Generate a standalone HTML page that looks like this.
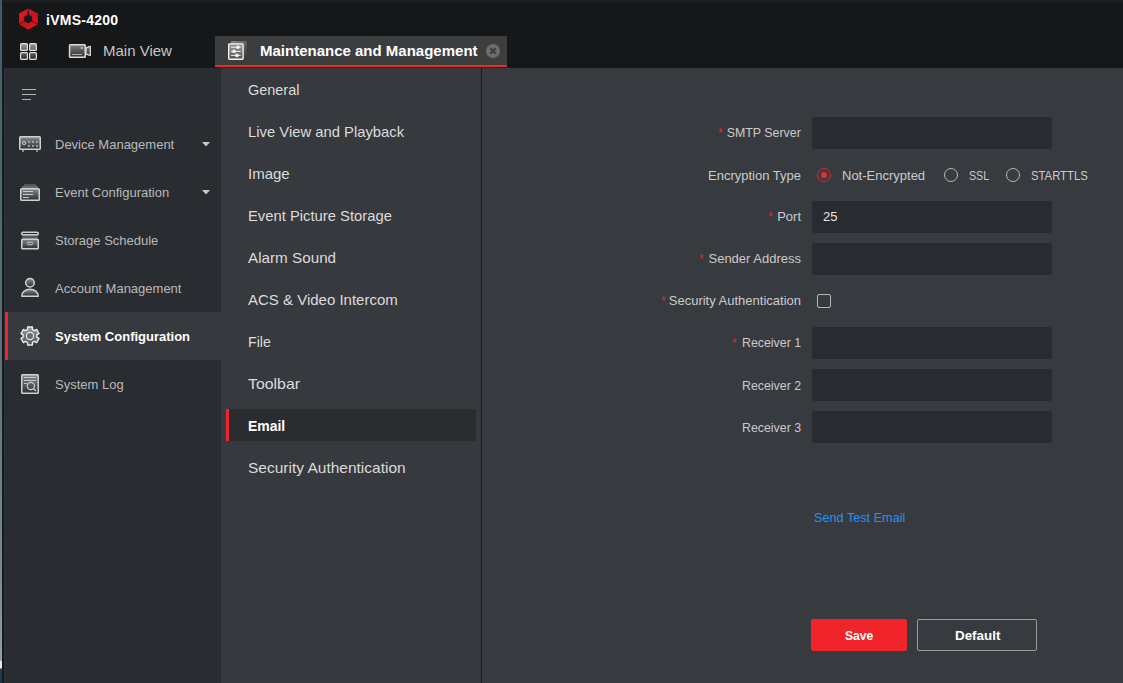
<!DOCTYPE html>
<html><head><meta charset="utf-8">
<style>
*{margin:0;padding:0;box-sizing:border-box;}
html,body{width:1123px;height:683px;overflow:hidden;background:#161719;font-family:"Liberation Sans",sans-serif;}
.a{position:absolute;}
.m{position:absolute;white-space:nowrap;line-height:1;}
#desk{left:0;top:0;width:2px;height:683px;background:linear-gradient(to bottom,#43586a 0px,#4f6570 150px,#5a6f7a 330px,#6a7f88 480px,#7d9099 600px,#8fa0a8 660px,#e6ecee 662px,#e6ecee 668px,#1d3f5c 669px,#163550 683px);}
#wline{left:2px;top:0;width:2px;height:683px;background:#17191b;}
#topl{left:3px;top:0;width:1120px;height:2px;background:#1c1f22;}
#side{left:4px;top:68px;width:217px;height:615px;background:#292c30;border-left:1px solid #2f3236;}
#menu{left:221px;top:68px;width:260px;height:615px;background:#36393e;}
#div{left:481px;top:68px;width:1px;height:615px;background:#1a1c1f;}
#cont{left:482px;top:68px;width:641px;height:615px;background:#373a3f;}
.tab{left:215px;top:36px;width:292px;height:31px;background:#3c3d3f;}
.tabred{left:215px;top:65px;width:292px;height:2px;background:#f0252b;}
.si{color:#bababa;font-size:13px;}
.mi{color:#dcdcdc;font-size:15px;}
.lbl{color:#cbcbcb;font-size:13px;}
.inp{position:absolute;left:812px;width:240px;height:32px;background:#282b2f;border-radius:3px;}
.req{color:#e8262d;font-size:12px;}
</style></head><body>
<div class="a" id="desk"></div>
<div class="a" id="wline"></div>
<div class="a" id="topl"></div>

<!-- header -->
<svg class="a" style="left:16px;top:6px" width="26" height="26" viewBox="0 0 26 26">
  <defs><linearGradient id="lg" x1="0" y1="0" x2="1" y2="1"><stop offset="0" stop-color="#f01c22"/><stop offset="0.5" stop-color="#c8121a"/><stop offset="1" stop-color="#e8161d"/></linearGradient></defs>
  <path d="M12.4 2.4 L21.8 7.6 L21.8 18.3 L12.4 23.8 L3.1 18.3 L3.1 7.6 Z" fill="url(#lg)"/>
  <path d="M12.1 2.4 L12.5 2.4 L13.3 10 L11.3 10 Z" fill="#161719"/><path d="M12.2 13 L3.1 18.3 M12.2 13 L21.8 18.3" stroke="#161719" stroke-width="0.7"/>
  <path d="M12.2 8.6 L16.1 10.8 L16.1 15.1 L12.2 17.2 L8.3 15.1 L8.3 10.8 Z" fill="#161719"/>
</svg>
<div class="m" style="left:46px;top:13px;color:#fff;font-size:14px;font-weight:bold;letter-spacing:0.25px;">iVMS-4200</div>

<svg class="a" style="left:19px;top:42px" width="20" height="20" viewBox="0 0 20 20">
 <defs><linearGradient id="g1" x1="0" y1="0" x2="0" y2="1"><stop offset="0" stop-color="#a0a0a0"/><stop offset="1" stop-color="#606060"/></linearGradient>
 <linearGradient id="g2" x1="0" y1="0" x2="0" y2="1"><stop offset="0" stop-color="#5e5e5e"/><stop offset="1" stop-color="#2a2a2a"/></linearGradient></defs>
 <rect x="1.6" y="1.6" width="6.8" height="6.8" rx="0.9" fill="url(#g1)" stroke="#dedede" stroke-width="1.2"/>
 <rect x="10.6" y="1.6" width="6.8" height="6.8" rx="0.9" fill="url(#g1)" stroke="#dedede" stroke-width="1.2"/>
 <rect x="1.6" y="10.6" width="6.8" height="6.8" rx="0.9" fill="url(#g2)" stroke="#dedede" stroke-width="1.2"/>
 <rect x="10.6" y="10.6" width="6.8" height="6.8" rx="0.9" fill="url(#g2)" stroke="#dedede" stroke-width="1.2"/>
</svg>

<svg class="a" style="left:66px;top:42px" width="28" height="18" viewBox="0 0 28 18">
 <defs><linearGradient id="g3" x1="0" y1="0" x2="0" y2="1"><stop offset="0" stop-color="#7e7e7e"/><stop offset="1" stop-color="#303030"/></linearGradient></defs>
 <rect x="3.55" y="2.65" width="15.7" height="12.6" rx="0.8" fill="url(#g3)" stroke="#dadada" stroke-width="1.5"/>
 <path d="M20 6 Q22.5 4.8 24.3 4.4 L24.3 13.4 Q22.5 13 20 11.8 Z" fill="url(#g3)" stroke="#dadada" stroke-width="1.3" stroke-linejoin="round"/>
 <rect x="14.8" y="4.9" width="2.1" height="2.1" fill="#b5b5b5"/>
 <rect x="6" y="12" width="10" height="0.9" fill="#bdbdbd"/>
</svg>
<div class="m" style="left:103px;top:43px;color:#c6c6c6;font-size:15px;">Main View</div>

<div class="a tab"></div>
<div class="a tabred"></div>
<svg class="a" style="left:226px;top:39px" width="22" height="24" viewBox="0 0 22 24">
 <defs><linearGradient id="g4" x1="0" y1="0" x2="0" y2="1"><stop offset="0" stop-color="#a0a0a0"/><stop offset="1" stop-color="#505050"/></linearGradient>
 <linearGradient id="g5" x1="0" y1="0" x2="1" y2="1"><stop offset="0" stop-color="#8a8a8a"/><stop offset="1" stop-color="#3b3c3f"/></linearGradient></defs>
 <rect x="5" y="2" width="15.8" height="16" rx="1" fill="url(#g5)"/>
 <rect x="2.7" y="4.8" width="14.4" height="15.4" rx="0.8" fill="url(#g4)" stroke="#f2f2f2" stroke-width="1.35"/>
 <path d="M5 8.3 H14.7 M5 12.4 H14.7 M5 16.4 H14.7" stroke="#ececec" stroke-width="1"/>
 <circle cx="11.9" cy="8.3" r="1.8" fill="#f2f2f2"/>
 <circle cx="8" cy="12.4" r="1.8" fill="#f2f2f2"/>
 <circle cx="10.9" cy="16.4" r="1.8" fill="#f2f2f2"/>
</svg>
<div class="m" style="left:260px;top:43px;color:#fff;font-size:15px;font-weight:bold;">Maintenance and Management</div>
<svg class="a" style="left:485px;top:43px" width="16" height="16" viewBox="0 0 16 16">
 <circle cx="8" cy="8" r="7" fill="#6c6c6c"/>
 <path d="M5.3 5.3 L10.7 10.7 M10.7 5.3 L5.3 10.7" stroke="#3b3c3f" stroke-width="2"/>
</svg>

<!-- panels -->
<div class="a" id="side"></div>
<div class="a" id="menu"></div>
<div class="a" id="div"></div>
<div class="a" id="cont"></div>

<!-- sidebar -->
<div class="a" style="left:5px;top:312px;width:216px;height:48px;background:#36393e;"></div>
<div class="a" style="left:5px;top:312px;width:3px;height:48px;background:#f0252b;"></div>
<svg class="a" style="left:22px;top:89px" width="14" height="11" viewBox="0 0 14 11">
 <path d="M0 0.5 H14 M0 5.5 H14 M0 10.5 H9" stroke="#b4b4b4" stroke-width="1"/>
</svg>


<svg class="a" style="left:16px;top:132px" width="28" height="24" viewBox="0 0 28 24">
 <defs><linearGradient id="gi" x1="0" y1="0" x2="0" y2="1"><stop offset="0" stop-color="#8a8a8a"/><stop offset="1" stop-color="#2e2e2e"/></linearGradient></defs>
 <rect x="3.75" y="4.75" width="20.5" height="12.5" rx="0.8" fill="url(#gi)" stroke="#d0d0d0" stroke-width="1.5"/>
 <rect x="6" y="18" width="2" height="2" fill="#8a8a8a"/><rect x="20" y="18" width="2" height="2" fill="#8a8a8a"/>
 <circle cx="8" cy="11" r="1.6" fill="none" stroke="#d0d0d0" stroke-width="1"/>
 <g fill="#9c9c9c"><rect x="12" y="9" width="2" height="2"/><rect x="16" y="9" width="2" height="2"/><rect x="20" y="9" width="2" height="2"/><rect x="12" y="13" width="2" height="2"/><rect x="16" y="13" width="2" height="2"/><rect x="20" y="13" width="2" height="2"/></g>
</svg>
<svg class="a" style="left:16px;top:180px" width="28" height="24" viewBox="0 0 28 24">
 <rect x="8" y="4" width="12" height="2" fill="#555"/>
 <rect x="6" y="6" width="16" height="2" fill="#6a6a6a"/>
 <rect x="4.75" y="8.75" width="18.5" height="11.5" rx="0.8" fill="url(#gi)" stroke="#d0d0d0" stroke-width="1.5"/>
 <path d="M7 11.5 H17 M7 14.5 H17 M7 17.5 H13" stroke="#c8c8c8" stroke-width="1"/>
</svg>
<svg class="a" style="left:16px;top:228px" width="28" height="24" viewBox="0 0 28 24">
 <path d="M6.5 7 H21.5 L22 11 H6 Z" fill="#5a5a5a"/>
 <rect x="5.75" y="4.25" width="16.5" height="2.6" rx="1.2" fill="#222" stroke="#d0d0d0" stroke-width="1.5"/>
 <rect x="5.75" y="11.25" width="16.5" height="9.5" rx="0.8" fill="url(#gi)" stroke="#d0d0d0" stroke-width="1.5"/>
 <rect x="11.3" y="14.3" width="5.4" height="2.4" rx="1.1" fill="none" stroke="#c8c8c8" stroke-width="1"/>
</svg>
<svg class="a" style="left:16px;top:274px" width="28" height="24" viewBox="0 0 28 24">
 <circle cx="14" cy="8.8" r="4.3" fill="url(#gi)" stroke="#d0d0d0" stroke-width="1.5"/>
 <path d="M5.75 22.25 C5.75 17.8 9.5 15.25 14 15.25 C18.5 15.25 22.25 17.8 22.25 22.25 Z" fill="url(#gi)" stroke="#d0d0d0" stroke-width="1.5" stroke-linejoin="round"/>
</svg>
<svg class="a" style="left:18px;top:324px" width="24" height="24" viewBox="0 0 24 24">
 <defs><linearGradient id="gg" x1="0" y1="0" x2="0" y2="1"><stop offset="0" stop-color="#9a9a9a"/><stop offset="1" stop-color="#555"/></linearGradient></defs>
 <path d="M9.53 5.56 L9.59 3.02 L14.41 3.02 L14.47 5.56 L16.34 6.64 L18.58 5.42 L20.98 9.59 L18.82 10.92 L18.82 13.08 L20.98 14.41 L18.58 18.58 L16.34 17.36 L14.47 18.44 L14.41 20.98 L9.59 20.98 L9.53 18.44 L7.66 17.36 L5.42 18.58 L3.02 14.41 L5.18 13.08 L5.18 10.92 L3.02 9.59 L5.42 5.42 L7.66 6.64 Z" fill="url(#gg)" stroke="#ececec" stroke-width="1.4" stroke-linejoin="round"/>
 <circle cx="12" cy="12" r="3.6" fill="#6a6a6a" stroke="#ececec" stroke-width="1.1"/>
</svg>
<svg class="a" style="left:16px;top:370px" width="28" height="26" viewBox="0 0 28 26">
 <rect x="5.75" y="4.75" width="16.5" height="18.5" rx="0.8" fill="url(#gi)" stroke="#d0d0d0" stroke-width="1.5"/>
 <path d="M8 7.5 H20 M8 10.5 H20 M8 13.5 H11" stroke="#c8c8c8" stroke-width="1"/>
 <circle cx="14.9" cy="16" r="3.6" fill="none" stroke="#d0d0d0" stroke-width="1.2"/>
 <path d="M17.6 18.7 L20 21" stroke="#d0d0d0" stroke-width="1.2"/>
</svg>
<div class="m si" style="left:55px;top:138px;">Device Management</div>
<div class="m si" style="left:55px;top:186px;">Event Configuration</div>
<div class="m si" style="left:55px;top:234px;">Storage Schedule</div>
<div class="m si" style="left:55px;top:282px;">Account Management</div>
<div class="m si" style="left:55px;top:330px;color:#fff;font-weight:bold;">System Configuration</div>
<div class="m si" style="left:55px;top:378px;">System Log</div>

<svg class="a" style="left:201px;top:141px" width="10" height="6" viewBox="0 0 10 6"><path d="M1 1 H9 L5 5.5 Z" fill="#c8c8c8"/></svg>
<svg class="a" style="left:201px;top:189px" width="10" height="6" viewBox="0 0 10 6"><path d="M1 1 H9 L5 5.5 Z" fill="#c8c8c8"/></svg>

<!-- menu -->
<div class="m mi" style="left:248px;top:82px;transform:scaleX(0.964);transform-origin:left;">General</div>
<div class="m mi" style="left:248px;top:124px;transform:scaleX(0.987);transform-origin:left;">Live View and Playback</div>
<div class="m mi" style="left:248px;top:166px;">Image</div>
<div class="m mi" style="left:248px;top:208px;transform:scaleX(0.986);transform-origin:left;">Event Picture Storage</div>
<div class="m mi" style="left:248px;top:250px;transform:scaleX(1.016);transform-origin:left;">Alarm Sound</div>
<div class="m mi" style="left:248px;top:292px;">ACS &amp; Video Intercom</div>
<div class="m mi" style="left:248px;top:334px;transform:scaleX(0.95);transform-origin:left;">File</div>
<div class="m mi" style="left:248px;top:376px;transform:scaleX(1.057);transform-origin:left;">Toolbar</div>
<div class="a" style="left:226px;top:409px;width:250px;height:32px;background:#2a2c30;"></div>
<div class="a" style="left:226px;top:409px;width:3px;height:32px;background:#f0252b;"></div>
<div class="m mi" style="left:248px;top:418px;color:#fff;font-weight:bold;transform:scaleX(0.93);transform-origin:left;">Email</div>
<div class="m mi" style="left:248px;top:460px;transform:scaleX(1.033);transform-origin:left;">Security Authentication</div>

<!-- form -->
<div class="m lbl" style="right:322px;top:126px;transform:scaleX(0.952);transform-origin:right;">SMTP Server</div>
<div class="inp" style="top:117px;"></div>
<div class="m lbl" style="right:322px;top:169px;">Encryption Type</div>
<div class="m lbl" style="right:322px;top:210px;">Port</div>
<div class="inp" style="top:201px;"></div>
<div class="m lbl" style="left:823px;top:210px;color:#e6e6e6;">25</div>
<div class="m lbl" style="right:322px;top:252px;">Sender Address</div>
<div class="inp" style="top:243px;"></div>
<div class="m lbl" style="right:322px;top:294px;">Security Authentication</div>
<div class="m lbl" style="right:322px;top:336px;transform:scaleX(0.952);transform-origin:right;">Receiver 1</div>
<div class="inp" style="top:327px;"></div>
<div class="m lbl" style="right:322px;top:379px;transform:scaleX(0.952);transform-origin:right;">Receiver 2</div>
<div class="inp" style="top:369px;"></div>
<div class="m lbl" style="right:322px;top:421px;transform:scaleX(0.952);transform-origin:right;">Receiver 3</div>
<div class="inp" style="top:411px;"></div>
<div class="m req" style="left:718px;top:127px;">*</div>
<div class="m req" style="left:768px;top:211px;">*</div>
<div class="m req" style="left:699px;top:253px;">*</div>
<div class="m req" style="left:661px;top:295px;">*</div>
<div class="m req" style="left:732px;top:337px;">*</div>

<svg class="a" style="left:816px;top:167px" width="16" height="16" viewBox="0 0 16 16"><circle cx="8" cy="8" r="6.5" fill="none" stroke="#e8262d" stroke-width="1"/><circle cx="8" cy="8" r="3.1" fill="#ec2a31"/></svg>
<div class="m lbl" style="left:842px;top:169px;">Not-Encrypted</div>
<svg class="a" style="left:943px;top:167px" width="16" height="16" viewBox="0 0 16 16"><circle cx="8" cy="8" r="6.5" fill="none" stroke="#b8b8b8" stroke-width="1"/></svg>
<div class="m lbl" style="left:969px;top:169px;transform:scaleX(0.82);transform-origin:left;">SSL</div>
<svg class="a" style="left:1005px;top:167px" width="16" height="16" viewBox="0 0 16 16"><circle cx="8" cy="8" r="6.5" fill="none" stroke="#b8b8b8" stroke-width="1"/></svg>
<div class="m lbl" style="left:1031px;top:169px;transform:scaleX(0.87);transform-origin:left;">STARTTLS</div>

<div class="a" style="left:817px;top:294px;width:14px;height:14px;border:1px solid #b8b8b8;border-radius:2px;"></div>

<div class="m" style="left:814px;top:511px;color:#2592f2;font-size:13px;transform:scaleX(0.975);transform-origin:left;">Send Test Email</div>

<div class="a" style="left:811px;top:619px;width:96px;height:32px;background:#f0252b;border-radius:2px;"></div>
<div class="m" style="left:845px;top:629px;color:#fff;font-size:13px;font-weight:bold;transform:scaleX(0.93);transform-origin:left;">Save</div>
<div class="a" style="left:917px;top:619px;width:120px;height:32px;border:1px solid #9a9a9a;border-radius:2px;"></div>
<div class="m" style="left:955px;top:629px;color:#fff;font-size:13px;font-weight:bold;transform:scaleX(1.03);transform-origin:left;">Default</div>

</body></html>
